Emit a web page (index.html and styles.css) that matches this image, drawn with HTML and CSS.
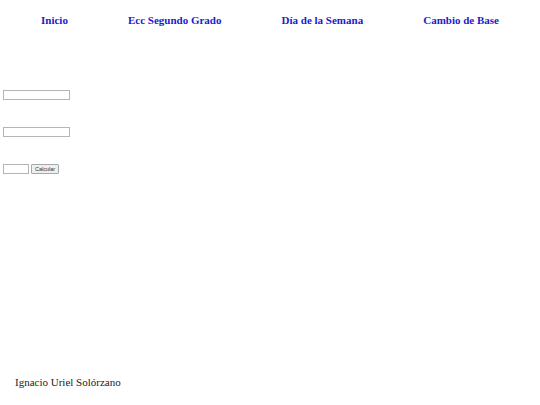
FILE: index.html
```html
<!DOCTYPE html>
<html>
<head>
    <meta charset="UTF-8">
    <meta name="viewport" content="width=device-width, initial-scale=1.0">
    <title>Cambio de Base</title>
    <link rel="stylesheet" href="styles.css">
</head>
<body>
    <nav class="menu">
        <a href="#">Inicio</a>
        <a href="#">Ecc Segundo Grado</a>
        <a href="#">Día de la Semana</a>
        <a href="#">Cambio de Base</a>
    </nav>

    <div class="form">
        <div class="row"><input type="text" class="field"></div>
        <div class="row"><input type="text" class="field"></div>
        <div class="row">
            <input type="text" class="field small">
            <button class="calc-btn">Calcular</button>
        </div>
    </div>

    <footer class="footer">Ignacio Uriel Solórzano</footer>
</body>
</html>
```

FILE: styles.css
```css
body {
    margin: 0;
    width: 540px;
    height: 405px;
    display: flex;
    flex-direction: column;
    font-family: "Liberation Serif", "Times New Roman", serif;
    background: #fff;
}
.menu {
    display: flex;
    justify-content: space-between;
    padding: 13px 41px 0;
}
.menu a {
    font-size: 11px;
    font-weight: bold;
    color: #1a1ad0;
    text-decoration: none;
    line-height: 14px;
}
.form {
    display: flex;
    flex-direction: column;
    gap: 27px;
    padding: 63px 3px 0;
}
.row {
    display: flex;
    align-items: center;
    gap: 2px;
    height: 10px;
}
.field {
    box-sizing: border-box;
    width: 67px;
    height: 10px;
    margin: 0;
    padding: 0;
    border: 1px solid #b5b5b5;
    background: #fff;
}
.field.small {
    width: 26px;
}
.calc-btn {
    box-sizing: border-box;
    width: 28px;
    height: 10px;
    margin: 0;
    padding: 0;
    font-family: "Liberation Sans", Arial, sans-serif;
    font-size: 5.5px;
    line-height: 8px;
    color: #333;
    background: #efefef;
    border: 1px solid #a8a8a8;
    border-radius: 1px;
}
.footer {
    margin-top: auto;
    padding: 0 0 16px 15px;
    font-size: 11px;
    line-height: 14px;
    color: #222;
}
```
